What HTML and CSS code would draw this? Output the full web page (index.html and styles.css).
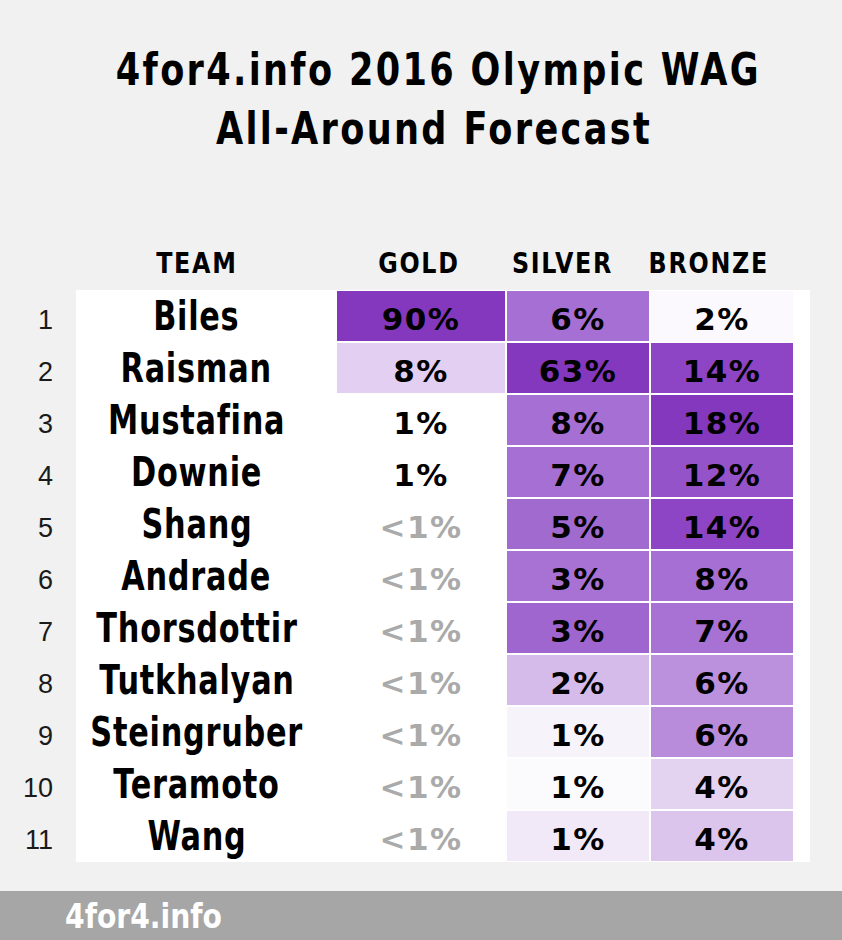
FILE: index.html
```html
<!DOCTYPE html>
<html lang="en">
<head>
<meta charset="utf-8">
<title>4for4.info 2016 Olympic WAG All-Around Forecast</title>
<link rel="stylesheet" href="styles.css">
</head>
<body>
<div class="page">
  <h1 class="title"><span class="title-line">4for4.info 2016 Olympic WAG</span><span class="title-line">All-Around Forecast</span></h1>

  <div class="heads">
    <div class="head head-team"><span>TEAM</span></div>
    <div class="head head-gold"><span>GOLD</span></div>
    <div class="head head-silver"><span>SILVER</span></div>
    <div class="head head-bronze"><span>BRONZE</span></div>
  </div>

  <div class="table">
    <div class="rank">1</div><div class="name"><span>Biles</span></div>
    <div class="pct" style="background:#8338be">90%</div>
    <div class="pct" style="background:#a66fd3">6%</div>
    <div class="pct" style="background:#fbf9fd">2%</div>

    <div class="rank">2</div><div class="name"><span>Raisman</span></div>
    <div class="pct" style="background:#e2cff1">8%</div>
    <div class="pct" style="background:#8338be">63%</div>
    <div class="pct" style="background:#8d45c5">14%</div>

    <div class="rank">3</div><div class="name"><span>Mustafina</span></div>
    <div class="pct">1%</div>
    <div class="pct" style="background:#a66fd3">8%</div>
    <div class="pct" style="background:#8338be">18%</div>

    <div class="rank">4</div><div class="name"><span>Downie</span></div>
    <div class="pct">1%</div>
    <div class="pct" style="background:#a66fd3">7%</div>
    <div class="pct" style="background:#9553ca">12%</div>

    <div class="rank">5</div><div class="name"><span>Shang</span></div>
    <div class="pct low">&lt;1%</div>
    <div class="pct" style="background:#a16acf">5%</div>
    <div class="pct" style="background:#8d45c5">14%</div>

    <div class="rank">6</div><div class="name"><span>Andrade</span></div>
    <div class="pct low">&lt;1%</div>
    <div class="pct" style="background:#a772d4">3%</div>
    <div class="pct" style="background:#a66fd3">8%</div>

    <div class="rank">7</div><div class="name"><span>Thorsdottir</span></div>
    <div class="pct low">&lt;1%</div>
    <div class="pct" style="background:#a066cf">3%</div>
    <div class="pct" style="background:#a871d4">7%</div>

    <div class="rank">8</div><div class="name"><span>Tutkhalyan</span></div>
    <div class="pct low">&lt;1%</div>
    <div class="pct" style="background:#d5bbe9">2%</div>
    <div class="pct" style="background:#bb90dd">6%</div>

    <div class="rank">9</div><div class="name"><span>Steingruber</span></div>
    <div class="pct low">&lt;1%</div>
    <div class="pct" style="background:#f7f3fb">1%</div>
    <div class="pct" style="background:#b88bdb">6%</div>

    <div class="rank">10</div><div class="name"><span>Teramoto</span></div>
    <div class="pct low">&lt;1%</div>
    <div class="pct" style="background:#fbfafd">1%</div>
    <div class="pct" style="background:#e3d3f1">4%</div>

    <div class="rank">11</div><div class="name"><span>Wang</span></div>
    <div class="pct low">&lt;1%</div>
    <div class="pct" style="background:#f1e9f8">1%</div>
    <div class="pct" style="background:#dbc5ed">4%</div>
  </div>
</div>
<footer class="footer"><span>4for4.info</span></footer>
</body>
</html>
```

FILE: styles.css
```css
html, body {
  margin: 0;
  padding: 0;
}

body {
  width: 842px;
  height: 940px;
  background: #f1f1f1;
  overflow: hidden;
  display: flex;
  flex-direction: column;
}

.page {
  flex: 1;
}

.title {
  margin: 0;
  padding-top: 40px;
  padding-left: 26px;
  text-align: center;
  font-family: "DejaVu Sans", sans-serif;
  font-weight: 700;
  font-size: 45px;
  line-height: 59px;
  color: #000;
  letter-spacing: 3px;
}

.title-line {
  display: block;
  white-space: nowrap;
  transform: scaleX(0.78);
}

.heads {
  display: grid;
  grid-template-columns: 76px 259px 170px 144px 144px;
  margin-top: 87px;
  margin-bottom: 9px;
  height: 36px;
  align-items: center;
  font-family: "DejaVu Sans", sans-serif;
  font-weight: 700;
  font-size: 28px;
  letter-spacing: 2px;
  color: #000;
}

.head {
  display: flex;
  justify-content: center;
}

.head span {
  display: inline-block;
  white-space: nowrap;
  transform: scaleX(0.85);
}

.head-team {
  grid-column: 2;
  padding-right: 18px;
}

.head-gold {
  padding-right: 2px;
}

.head-silver {
  padding-right: 30px;
}

.head-bronze {
  padding-right: 24px;
}

.table {
  width: 810px;
  padding: 1px 0;
  display: grid;
  grid-template-columns: 74px 259px 168px 142px 142px;
  grid-auto-rows: 50px;
  gap: 2px;
  background: linear-gradient(to right, transparent 76px, #ffffff 76px);
}

.rank {
  display: flex;
  align-items: center;
  justify-content: flex-end;
  padding-right: 21px;
  padding-top: 8px;
  font-family: "Liberation Sans", Arial, sans-serif;
  font-size: 27px;
  color: #1a1a1a;
}

.name {
  display: flex;
  align-items: center;
  justify-content: center;
  padding-right: 18px;
  font-family: "DejaVu Sans", sans-serif;
  font-weight: 700;
  font-size: 41px;
  letter-spacing: 1px;
  color: #000;
}

.name span {
  display: inline-block;
  white-space: nowrap;
  transform: scaleX(0.74);
}

.pct {
  display: flex;
  align-items: center;
  justify-content: center;
  padding-top: 6px;
  font-family: "DejaVu Sans", sans-serif;
  font-weight: 700;
  font-size: 31px;
  letter-spacing: 1.5px;
  color: #000;
}

.pct.low {
  color: #aaaaaa;
}

.footer {
  height: 49px;
  background: #a6a6a6;
  color: #ffffff;
  display: flex;
  align-items: center;
  padding-left: 65px;
  font-family: "DejaVu Sans", sans-serif;
  font-weight: 700;
  font-size: 34px;
}

.footer span {
  display: inline-block;
  white-space: nowrap;
  transform: scaleX(0.83);
  transform-origin: left center;
}
```
